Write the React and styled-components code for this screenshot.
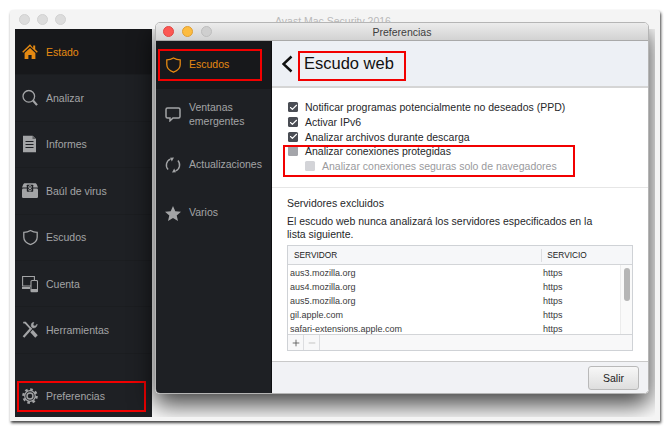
import styled, { createGlobalStyle } from "styled-components";
import { Check, Plus, Minus } from "lucide-react";

const GREY = "#a3a4a6";
const ORANGE = "#e58a12";
const DARK = "#1e2024";

const GlobalStyle = createGlobalStyle`
    html, body { margin: 0; padding: 0; background: #fff; }
    body { font-family: "Liberation Sans", Arial, sans-serif; }
`;

const Desktop = styled.div`
    position: relative;
    width: 671px;
    height: 433px;
    overflow: hidden;
    padding: 10px 0 0 10px;
    box-sizing: border-box;
`;

/* ventana de fondo */
const MainWindow = styled.div`
    width: 650px;
    height: 411px;
    box-sizing: border-box;
    padding: 0 5px 4px;
    background: #f4f4f4;
    box-shadow: 1px 2px 3px rgba(0,0,0,.75);
    display: flex;
    flex-direction: column;
    border-radius: 3px 3px 0 0;
`;
const MainTitleBar = styled.div`
    height: 19px;
    flex: none;
    display: flex;
    align-items: center;
    gap: 7px;
    padding-left: 4px;
    font-size: 10.5px;
    color: #b9b9b9;
`;
const Dot = styled.span`
    width: 9px;
    height: 9px;
    border-radius: 50%;
    background: ${p => p.$color};
    border: 0.5px solid ${p => p.$edge || p.$color};
    flex: none;
`;
const MainTitle = styled.span`
    margin-left: 202px;
    margin-top: 2px;
    white-space: nowrap;
`;
const MainBody = styled.div`
    flex: 1;
    display: flex;
    background: #fff;
    min-height: 0;
`;
const MainSidebar = styled.div`
    width: 137px;
    flex: none;
    background: ${DARK};
    display: flex;
    flex-direction: column;
`;
const MainItem = styled.div`
    position: relative;
    height: 46.4px;
    flex: none;
    display: flex;
    align-items: center;
    box-sizing: border-box;
    padding-left: 31px;
    font-size: 10.5px;
    color: ${p => (p.$active ? ORANGE : GREY)};
    background: ${p => (p.$active ? "#17181b" : "transparent")};
    border-bottom: 1px solid #1b1d20;
`;
const MainIcon = styled.span`
    position: absolute;
    left: 7px;
    top: 50%;
    transform: translateY(-50%);
    width: 16px;
    height: 17px;
    display: flex;
    align-items: center;
    justify-content: center;
`;
const BottomItem = styled(MainItem)`
    margin-top: auto;
    margin-bottom: 4px;
    border-bottom: 0;
    height: 34px;
`;
const RedBox = styled.div`
    position: absolute;
    box-sizing: border-box;
    border: 2px solid #f20000;
    left: ${p => p.$l}px;
    top: ${p => p.$t}px;
    width: ${p => p.$w}px;
    height: ${p => p.$h}px;
    pointer-events: none;
`;

/* sombra de preferencias, recortada por la ventana de fondo */
const ShadowClip = styled.div`
    position: absolute;
    left: 15px;
    top: 29px;
    width: 640px;
    height: 388px;
    overflow: hidden;
`;
const PrefsShadow = styled.div`
    position: absolute;
    left: 140px;
    top: -7px;
    width: 494px;
    height: 372px;
    border-radius: 5px;
    box-shadow: 0 10px 24px 1px rgba(0,0,0,.74);
`;

/* ventana de preferencias */
const PrefsWindow = styled.div`
    position: absolute;
    left: 155px;
    top: 22px;
    width: 494px;
    height: 372px;
    border-radius: 5px;
    overflow: hidden;
    display: flex;
    flex-direction: column;
    background: #fff;
    border: 1px solid #b5b5b5;
    box-sizing: border-box;
`;
const PrefsTitleBar = styled.div`
    position: relative;
    height: 17px;
    flex: none;
    background: linear-gradient(#ececec, #d2d2d2);
    border-bottom: 1px solid #a9a9a9;
    display: flex;
    align-items: center;
    gap: 8px;
    padding-left: 7px;
`;
const PrefsTitle = styled.span`
    position: absolute;
    left: 0;
    right: 0;
    text-align: center;
    font-size: 10.5px;
    color: #3d3d3d;
`;
const PrefsBody = styled.div`
    position: relative;
    flex: 1;
    display: flex;
    min-height: 0;
`;
const PrefsSidebar = styled.div`
    width: 116px;
    flex: none;
    background: ${DARK};
    display: flex;
    flex-direction: column;
    border-right: 1px solid #0e0f11;
    box-sizing: border-box;
`;
const PrefsItem = styled.div`
    height: ${p => p.$h}px;
    flex: none;
    box-sizing: border-box;
    display: flex;
    align-items: center;
    gap: 8px;
    padding-left: 9px;
    font-size: 10.5px;
    line-height: 13.5px;
    color: ${p => (p.$active ? ORANGE : GREY)};
    background: ${p => (p.$active ? "#17181b" : "transparent")};
`;
const PrefsIcon = styled.span`
    width: 16px;
    height: 17px;
    flex: none;
    display: flex;
    align-items: center;
    justify-content: center;
`;
const Content = styled.div`
    position: relative;
    flex: 1;
    display: flex;
    flex-direction: column;
    min-width: 0;
    color: #222;
`;
const Header = styled.div`
    height: 47px;
    flex: none;
    box-sizing: border-box;
    background: #edf0f5;
    border-bottom: 2px solid #d5d5d5;
    display: flex;
    align-items: center;
    padding-left: 9px;
    gap: 11px;
`;
const HeaderTitle = styled.h1`
    margin: 0;
    font-size: 16.5px;
    font-weight: 400;
    color: #111;
`;
const Options = styled.div`
    height: 100px;
    flex: none;
    box-sizing: border-box;
    padding-top: 12px;
    border-bottom: 1px solid #e6e6e6;
    display: flex;
    flex-direction: column;
`;
const OptionRow = styled.div`
    height: 14.7px;
    flex: none;
    display: flex;
    align-items: center;
    gap: 7px;
    padding-left: ${p => (p.$sub ? 33 : 16)}px;
    font-size: 10.5px;
    color: ${p => (p.$muted ? "#9a9a9d" : "#26272a")};
`;
const Box = styled.span`
    width: 10px;
    height: 10px;
    border-radius: 1.5px;
    flex: none;
    background: ${p => p.$bg};
    display: flex;
    align-items: center;
    justify-content: center;
`;
const Servers = styled.div`
    flex: 1;
    padding: 9px 16px 0 15px;
    min-height: 0;
`;
const SectionTitle = styled.div`
    font-size: 10.5px;
    line-height: 13px;
    color: #26272a;
`;
const Description = styled.div`
    margin-top: 5px;
    font-size: 10.5px;
    line-height: 13px;
    color: #26272a;
    width: 320px;
`;
const Table = styled.div`
    margin-top: 4px;
    width: 346px;
    height: 106px;
    box-sizing: border-box;
    border: 1px solid #cfd2d6;
    display: flex;
    flex-direction: column;
`;
const TableHead = styled.div`
    height: 19px;
    flex: none;
    display: flex;
    align-items: center;
    box-sizing: border-box;
    background: #f6f7f9;
    border-bottom: 1px solid #d3d5d8;
    font-size: 8.3px;
    color: #222;
`;
const HeadCell = styled.div`
    width: ${p => p.$w}px;
    box-sizing: border-box;
    padding-left: ${p => p.$pad}px;
    border-right: ${p => (p.$line ? "1px solid #dcdde0" : "0")};
    line-height: 13px;
`;
const TableBody = styled.div`
    position: relative;
    flex: 1;
    min-height: 0;
    overflow: hidden;
    padding-top: 1px;
    background: #fff;
`;
const TableRow = styled.div`
    height: 14px;
    display: flex;
    align-items: center;
    font-size: 9px;
    color: #3a3a3c;
`;
const ServerCell = styled.div`
    width: 255px;
    flex: none;
    padding-left: 2px;
    box-sizing: border-box;
`;
const ScrollTrack = styled.div`
    position: absolute;
    right: 0;
    top: 0;
    bottom: 0;
    width: 11px;
    background: #fafafa;
    border-left: 1px solid #ececec;
`;
const ScrollThumb = styled.div`
    margin: 3px 0 0 3px;
    width: 6px;
    height: 33px;
    border-radius: 3px;
    background: #b6b6b6;
`;
const TableFoot = styled.div`
    height: 16px;
    flex: none;
    display: flex;
    box-sizing: border-box;
    background: #f8f8f9;
    border-top: 1px solid #d3d5d8;
`;
const FootButton = styled.div`
    width: 15px;
    display: flex;
    align-items: center;
    justify-content: center;
    border-right: 1px solid #dcdde0;
`;
const Footer = styled.div`
    height: 32px;
    flex: none;
    box-sizing: border-box;
    background: #f1f2f5;
    border-top: 1px solid #c9c9c9;
    display: flex;
    align-items: center;
    justify-content: flex-end;
    padding-right: 9px;
`;
const ExitButton = styled.div`
    width: 51px;
    height: 24px;
    box-sizing: border-box;
    border: 1px solid #b9b9b9;
    border-radius: 3px;
    background: linear-gradient(#f7f7f7, #dedede);
    font-size: 10.5px;
    color: #222;
    display: flex;
    align-items: center;
    justify-content: center;
`;

function HomeIcon() {
    return (
        <svg width="16" height="16" viewBox="0 0 16 16" fill={ORANGE}>
            <path d="M8 .8.2 8.2l1 1L8 2.8l6.8 6.4 1-1-2.6-2.5V2h-2v2.8z" />
            <path d="M2.6 9.4 8 4.4l5.4 5V15.4H9.6v-4H6.4v4H2.6z" />
        </svg>
    );
}
function SearchIcon() {
    return (
        <svg width="16" height="17" viewBox="0 0 16 17" fill="none" stroke={GREY}>
            <circle cx="6.8" cy="6.8" r="5.8" strokeWidth="1.3" />
            <path d="M11 11l4 4.6" strokeWidth="2.2" />
        </svg>
    );
}
function FileIcon() {
    return (
        <svg width="14" height="17" viewBox="0 0 14 17">
            <path d="M0 0h9.5L13 3.5V17H0z" fill={GREY} />
            <path d="M9.5 0v3.5H13z" fill="#5f6063" />
            <path d="M2.5 6h8M2.5 9h8M2.5 12h8" stroke={DARK} strokeWidth="1" />
        </svg>
    );
}
function VaultIcon() {
    return (
        <svg width="16" height="16" viewBox="0 0 16 16">
            <path d="M3 .8h10c1 0 1.6.7 2 1.6L16 5H0l1-2.6C1.400 1.500 2 .8 3 .8z" fill={GREY} />
            <rect x="0" y="6" width="16" height="9.500" rx="1.200" fill={GREY} />
            <rect x="4.800" y="2.200" width="6.400" height="7" rx=".6" fill={DARK} />
            <circle cx="8" cy="4.400" r="1.300" fill="none" stroke={GREY} />
            <circle cx="8" cy="7.200" r="1.300" fill="none" stroke={GREY} />
        </svg>
    );
}
function ShieldIcon({ color }) {
    return (
        <svg width="15" height="16" viewBox="0 0 15 16" fill="none" stroke={color} strokeWidth="1.300">
            <path d="M7.500 1C5.500 2.200 3.200 2.800.8 2.800v5c0 3.400 2.800 6 6.700 7.400 3.900-1.400 6.700-4 6.700-7.400v-5C11.800 2.800 9.500 2.200 7.500 1z" />
        </svg>
    );
}
function DevicesIcon() {
    return (
        <svg width="16" height="17" viewBox="0 0 16 17" fill="none" stroke={GREY}>
            <path d="M9 10.500H.6V1h11.800v3.500" strokeWidth="1.100" />
            <rect x="0" y="11.500" width="8" height="2" fill={GREY} stroke="none" />
            <rect x="9" y="5" width="6.500" height="11.500" rx="1" strokeWidth="1.100" />
            <rect x="9" y="13.500" width="6.500" height="3" rx=".5" fill={GREY} stroke="none" />
        </svg>
    );
}
function ToolsIcon() {
    return (
        <svg width="16" height="17" viewBox="0 0 16 17" fill="none" stroke={GREY}>
            <path d="M1.200 1.200 3 .8 9 7.500" strokeWidth="1.800" />
            <path d="M9.500 9.500l5 5.500" strokeWidth="3.400" />
            <path d="M1.500 15.500 9.500 6.500" strokeWidth="2.200" />
            <path d="M15.200 2.600 13 4.800l-2-1.400.8-2.600C9.800.800 8.600 3 9.500 5.500c1.500 1.400 5.500 1.600 5.700-2.900z" fill={GREY} strokeWidth=".5" />
        </svg>
    );
}
function GearIcon() {
    return (
        <svg width="17" height="17" viewBox="0 0 17 17" fill="none" stroke={GREY}>
            <circle cx="8.500" cy="8.500" r="7" strokeWidth="2.600" strokeDasharray="2.750 2.750" />
            <circle cx="8.500" cy="8.500" r="5.600" strokeWidth="1.300" />
            <circle cx="8.500" cy="8.500" r="3.200" strokeWidth="1.500" />
        </svg>
    );
}
function ChatIcon() {
    return (
        <svg width="16" height="15" viewBox="0 0 16 15" fill="none" stroke={GREY} strokeWidth="1.500">
            <path d="M2.500 1h11A1.500 1.500 0 0 1 15 2.500v7a1.500 1.500 0 0 1-1.500 1.500H8l-3 2.800V11H2.500A1.500 1.500 0 0 1 1 9.500v-7A1.500 1.500 0 0 1 2.500 1z" />
        </svg>
    );
}
function RefreshIcon() {
    return (
        <svg width="16" height="16" viewBox="0 0 16 16" fill="none" stroke={GREY} strokeWidth="1.400">
            <path d="M3.100 12.500A6.500 6.500 0 0 1 5.400 2.100" />
            <path d="M12.900 3.500A6.500 6.500 0 0 1 10.600 13.900" />
            <path d="M9 .6 5 .8l1.800 3.600zM7 15.400l4-.2-1.800-3.600z" fill={GREY} stroke="none" />
        </svg>
    );
}
function StarIcon() {
    return (
        <svg width="16" height="15" viewBox="0 0 16 15" fill={GREY}>
            <path d="M8 0l2.300 5.200 5.700.5-4.300 3.700 1.300 5.600L8 12l-5 3 1.300-5.600L0 5.700l5.700-.5z" />
        </svg>
    );
}
function BackArrow() {
    return (
        <svg width="12" height="18" viewBox="0 0 12 18" fill="none" stroke="#111" strokeWidth="2.400">
            <path d="M10.500 1.500 2.500 9l8 7.500" />
        </svg>
    );
}

const NAV = [
    ["Estado", <HomeIcon />, true],
    ["Analizar", <SearchIcon />],
    ["Informes", <FileIcon />],
    ["Baúl de virus", <VaultIcon />],
    ["Escudos", <ShieldIcon color={GREY} />],
    ["Cuenta", <DevicesIcon />],
    ["Herramientas", <ToolsIcon />],
];

const SERVERS = ["aus3.mozilla.org", "aus4.mozilla.org", "aus5.mozilla.org", "gil.apple.com", "safari-extensions.apple.com"];

function CheckOption({ children }) {
    return (
        <OptionRow>
            <Box $bg="#4a4d54">
                <Check size={9} color="#fff" strokeWidth={3} />
            </Box>
            {children}
        </OptionRow>
    );
}

export default function App() {
    return (
        <Desktop>
            <GlobalStyle />
            <MainWindow>
                <MainTitleBar>
                    <Dot $color="#dcdcdc" $edge="#d2d2d2" />
                    <Dot $color="#dcdcdc" $edge="#d2d2d2" />
                    <Dot $color="#dcdcdc" $edge="#d2d2d2" />
                    <MainTitle>Avast Mac Security 2016</MainTitle>
                </MainTitleBar>
                <MainBody>
                    <MainSidebar>
                        {NAV.map(([label, icon, active]) => (
                            <MainItem key={label} $active={active}>
                                <MainIcon>{icon}</MainIcon>
                                {label}
                            </MainItem>
                        ))}
                        <BottomItem>
                            <MainIcon><GearIcon /></MainIcon>
                            Preferencias
                            <RedBox $l={2} $t={2} $w={129} $h={31} />
                        </BottomItem>
                    </MainSidebar>
                </MainBody>
            </MainWindow>

            <ShadowClip><PrefsShadow /></ShadowClip>

            <PrefsWindow>
                <PrefsTitleBar>
                    <Dot $color="#fc5753" $edge="#df4744" />
                    <Dot $color="#fdbc40" $edge="#de9f34" />
                    <Dot $color="#cfcfcf" $edge="#bdbdbd" />
                    <PrefsTitle>Preferencias</PrefsTitle>
                </PrefsTitleBar>
                <PrefsBody>
                    <PrefsSidebar>
                        <PrefsItem $h={48} $active>
                            <PrefsIcon><ShieldIcon color={ORANGE} /></PrefsIcon>
                            Escudos
                        </PrefsItem>
                        <PrefsItem $h={51}>
                            <PrefsIcon><ChatIcon /></PrefsIcon>
                            <span>Ventanas<br />emergentes</span>
                        </PrefsItem>
                        <PrefsItem $h={49}>
                            <PrefsIcon><RefreshIcon /></PrefsIcon>
                            Actualizaciones
                        </PrefsItem>
                        <PrefsItem $h={48}>
                            <PrefsIcon><StarIcon /></PrefsIcon>
                            Varios
                        </PrefsItem>
                    </PrefsSidebar>
                    <Content>
                        <Header>
                            <BackArrow />
                            <HeaderTitle>Escudo web</HeaderTitle>
                        </Header>
                        <Options>
                            <CheckOption>Notificar programas potencialmente no deseados (PPD)</CheckOption>
                            <CheckOption>Activar IPv6</CheckOption>
                            <CheckOption>Analizar archivos durante descarga</CheckOption>
                            <OptionRow><Box $bg="#a4a5aa" />Analizar conexiones protegidas</OptionRow>
                            <OptionRow $sub $muted><Box $bg="#d3d4d8" />Analizar conexiones seguras solo de navegadores</OptionRow>
                        </Options>
                        <Servers>
                            <SectionTitle>Servidores excluidos</SectionTitle>
                            <Description>El escudo web nunca analizará los servidores especificados en la lista siguiente.</Description>
                            <Table>
                                <TableHead>
                                    <HeadCell $w={255} $pad={6} $line>SERVIDOR</HeadCell>
                                    <HeadCell $w={90} $pad={5}>SERVICIO</HeadCell>
                                </TableHead>
                                <TableBody>
                                    {SERVERS.map(name => (
                                        <TableRow key={name}>
                                            <ServerCell>{name}</ServerCell>
                                            https
                                        </TableRow>
                                    ))}
                                    <ScrollTrack><ScrollThumb /></ScrollTrack>
                                </TableBody>
                                <TableFoot>
                                    <FootButton><Plus size={10} color="#555" /></FootButton>
                                    <FootButton><Minus size={10} color="#bbb" /></FootButton>
                                </TableFoot>
                            </Table>
                        </Servers>
                        <Footer><ExitButton>Salir</ExitButton></Footer>
                        <RedBox $l={26} $t={10} $w={108} $h={30} />
                        <RedBox $l={11} $t={104} $w={292} $h={32} />
                    </Content>
                    <RedBox $l={2} $t={8} $w={104} $h={32} />
                </PrefsBody>
            </PrefsWindow>
        </Desktop>
    );
}
